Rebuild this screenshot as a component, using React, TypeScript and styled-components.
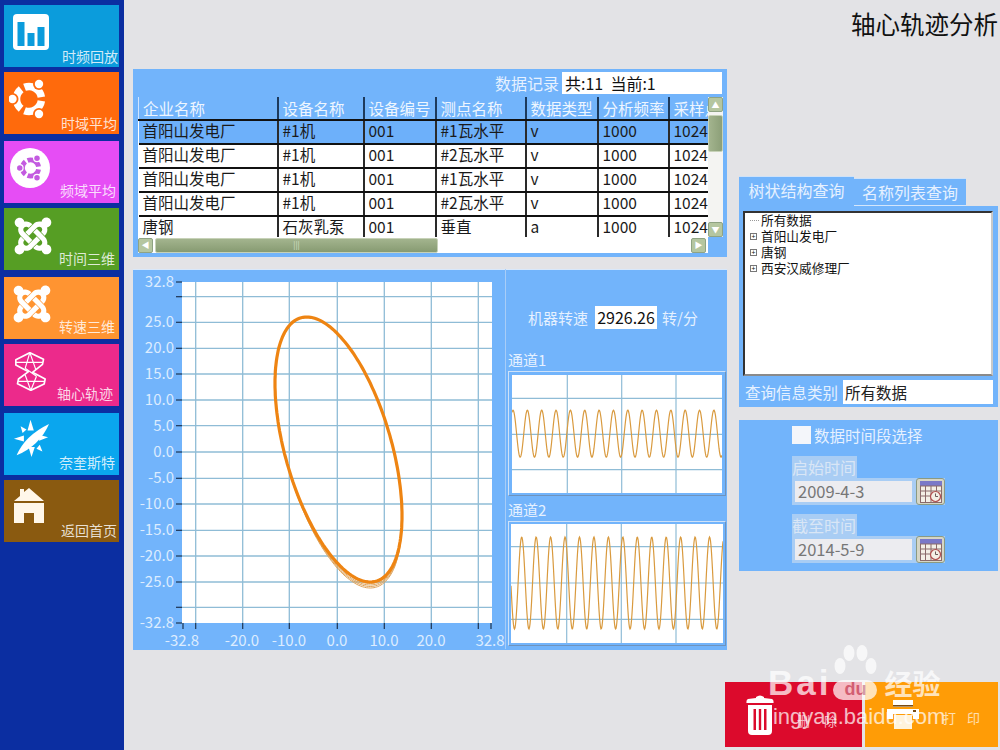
import styled, { createGlobalStyle } from "styled-components";
import { FaJoomla } from "react-icons/fa";

const GlobalStyle = createGlobalStyle`
    html, body {
        margin: 0;
        padding: 0;
        background: #e3e3e6;
        font-family: "Noto Sans CJK SC", "Liberation Sans", sans-serif;
    }
`

const BLUE = "#72b4fb";
const LABEL = "#e6f1ff";
const GRID = "#8fbcd6";

// three arcs split by slits at 0, 120 and 240 degrees, with a dot over each arc
const UbuntuMark = ({ color, bg }: { color: string; bg: string }) => {
    const arc = (from: number, to: number) => {
        const r = 12.5;
        const rad = (d: number) => (d * Math.PI) / 180;
        return `M${20 + r * Math.cos(rad(from))} ${20 + r * Math.sin(rad(from))} A${r} ${r} 0 0 1 ${20 + r * Math.cos(rad(to))} ${20 + r * Math.sin(rad(to))}`;
    };
    const dots = [[30, 5], [30, 35], [3.5, 20]];
    return (
        <g>
            <g fill="none" stroke={color} strokeWidth="7.5">
                <path d={arc(9, 111)} />
                <path d={arc(129, 231)} />
                <path d={arc(249, 351)} />
            </g>
            {dots.map(([cx, cy]) => <circle key={cy + cx} cx={cx} cy={cy} r="6" fill={bg} />)}
            {dots.map(([cx, cy]) => <circle key={cy + cx} cx={cx} cy={cy} r="4.200" fill={color} />)}
        </g>
    );
};

const BarsIcon = () => (
    <svg width="36" height="36" viewBox="0 0 36 36">
        <rect width="36" height="36" rx="4" fill="#fff" />
        <rect x="4.5" y="8" width="7" height="24" fill="#0b9cdc" />
        <rect x="14.5" y="19" width="7" height="13" fill="#0b9cdc" />
        <rect x="24.5" y="13" width="7" height="19" fill="#0b9cdc" />
    </svg>
);

const UbuntuIcon = () => (
    <svg width="40" height="40" viewBox="0 0 40 40">
        <UbuntuMark color="#fff" bg="#ff6a0c" />
    </svg>
);

const UbuntuDiscIcon = () => (
    <svg width="40" height="40" viewBox="0 0 40 40">
        <circle cx="20" cy="20" r="20" fill="#fff" />
        <g transform="translate(7.500 7) scale(0.65)">
            <UbuntuMark color="#c35be0" bg="#fff" />
        </g>
    </svg>
);

const ZuneIcon = () => (
    <svg width="31" height="39" viewBox="28 11 92 117" fill="none" stroke="#fff" strokeLinejoin="round">
        <path d="M72 13 L113 33 L110 48 L80 72 L118 92 L115 107 L75 126 L35 106 L38 92 L68 70 L30 50 L30 34 Z" strokeWidth="5" />
        <path d="M72 13 L58 60 M72 13 L90 64 M30 42 L110 42 M58 60 L92 84 M75 126 L58 80 M75 126 L92 84 M37 99 L116 99" strokeWidth="3.500" />
    </svg>
);

const CompassIcon = () => (
    <svg width="37" height="39" viewBox="20 10 110 118" fill="#fff">
        <path d="M30 120 Q55 60 128 25 Q100 90 30 120 Z" />
        <path d="M72 12 L63 45 L82 45 Z M75 125 L66 95 L85 95 Z M22 70 L52 60 L52 78 Z M125 65 L98 58 L98 76 Z" />
        <path d="M42 32 L60 42 L48 52 Z M108 108 L90 100 L100 88 Z" />
    </svg>
);

const HomeIcon = () => (
    <svg width="30" height="35" viewBox="0 0 30 35" fill="#fff7ea">
        <path d="M15 0 L30 13 L0 13 L6 8 L6 1 L10 1 L10 4 Z" />
        <path d="M0 15 H30 V35 H20 V25 H10 V35 H0 Z" />
    </svg>
);

const TrashIcon = () => (
    <svg width="28" height="40" viewBox="0 0 28 40" fill="#fff">
        <path d="M10 2 Q14 -1 18 2 L18 3 L26 4 Q28 5 27.5 8 L0.5 8 Q0 5 2 4 L10 3 Z" />
        <path fillRule="evenodd" d="M2 10 H26 V36 Q26 40 22 40 H6 Q2 40 2 36 Z M7.5 14 V35 H10 V14 Z M12.8 14 V35 H15.2 V14 Z M18 14 V35 H20.5 V14 Z" />
    </svg>
);

const PrinterIcon = () => (
    <svg width="32" height="29" viewBox="0 0 32 29">
        <rect x="6" y="0" width="20" height="7" fill="#fff" />
        <rect x="6" y="5" width="20" height="1.6" fill="#7a4b12" />
        <path d="M0 9 H32 V19 H26 V14 H6 V19 H0 Z" fill="#fff" />
        <rect x="7" y="15" width="18" height="14" fill="#fff3dc" />
        <rect x="26" y="10" width="3" height="2" fill="#7a4b12" />
    </svg>
);

const CalendarIcon = () => (
    <svg width="22" height="22" viewBox="0 0 22 22">
        <rect width="22" height="22" fill="#f4efe6" />
        <rect width="22" height="5" fill="#7a78c8" />
        <path d="M0 5 H22 M0 10 H22 M0 15 H22 M0 21.5 H22 M.5 5 V22 M5.5 5 V22 M11 5 V22 M16.500 5 V22 M21.500 5 V22" stroke="#8a6a6a" fill="none" />
        <circle cx="15.500" cy="15.500" r="5" fill="#f4efe6" stroke="#b05050" strokeWidth="1.200" />
        <path d="M15.500 12.500 V15.500 H18" stroke="#6a5a5a" fill="none" />
    </svg>
);

const PawIcon = () => (
    <svg width="44" height="46" viewBox="0 0 44 46" fill="#fff">
        <ellipse cx="7" cy="21" rx="5.500" ry="8" />
        <ellipse cx="16" cy="8" rx="5.500" ry="8" />
        <ellipse cx="29" cy="8" rx="5.500" ry="8" />
        <ellipse cx="38" cy="21" rx="5.500" ry="8" />
    </svg>
);

const tiles = [
    { label: "时频回放", bg: "#0b9cdc", mt: 5, pr: 1, pb: 1, left: 9, top: 9, icon: <BarsIcon /> },
    { label: "时域平均", bg: "#ff6a0c", mt: 5, pr: 2, pb: 1, left: 5, top: 7, icon: <UbuntuIcon /> },
    { label: "频域平均", bg: "#e64df5", mt: 7, pr: 3, pb: 3, left: 6, top: 7, icon: <UbuntuDiscIcon /> },
    { label: "时间三维", bg: "#569e24", mt: 5, pr: 4, pb: 2, left: 8, top: 7, icon: <FaJoomla size={42} color="#fff" /> },
    { label: "转速三维", bg: "#ff9431", mt: 7, pr: 4, pb: 3, left: 7, top: 6, icon: <FaJoomla size={42} color="#fff" /> },
    { label: "轴心轨迹", bg: "#ec2a8b", mt: 5, pr: 6, pb: 3, left: 11, top: 8, icon: <ZuneIcon /> },
    { label: "奈奎斯特", bg: "#0aa6ee", mt: 7, pr: 4, pb: 3, left: 9, top: 6, icon: <CompassIcon /> },
    { label: "返回首页", bg: "#8a5a10", mt: 5, pr: 2, pb: 2, left: 10, top: 8, icon: <HomeIcon /> },
];

const columns = [
    { title: "企业名称", width: 139 },
    { title: "设备名称", width: 86 },
    { title: "设备编号", width: 72 },
    { title: "测点名称", width: 90 },
    { title: "数据类型", width: 72 },
    { title: "分析频率", width: 71 },
    { title: "采样点数", width: 40 },
];

const rows = [
    ["首阳山发电厂", "#1机", "001", "#1瓦水平", "v", "1000", "1024"],
    ["首阳山发电厂", "#1机", "001", "#2瓦水平", "v", "1000", "1024"],
    ["首阳山发电厂", "#1机", "001", "#1瓦水平", "v", "1000", "1024"],
    ["首阳山发电厂", "#1机", "001", "#2瓦水平", "v", "1000", "1024"],
    ["唐钢", "石灰乳泵", "001", "垂直", "a", "1000", "1024"],
];

const orbitX = [195.7, 242.7, 289.3, 337.3, 384.3, 431.3, 478.3];
const orbitY = [296.7, 322.3, 348.3, 374, 400, 425.7, 452, 478.3, 504, 530.3, 556, 582, 607.3];
const yLabels = [
    { y: 282, t: "32.8" }, { y: 322.3, t: "25.0" }, { y: 348.3, t: "20.0" }, { y: 374, t: "15.0" },
    { y: 400, t: "10.0" }, { y: 425.7, t: "5.0" }, { y: 452, t: "0.0" }, { y: 478.3, t: "-5.0" },
    { y: 504, t: "-10.0" }, { y: 530.3, t: "-15.0" }, { y: 556, t: "-20.0" }, { y: 582, t: "-25.0" },
    { y: 623, t: "-32.8" },
];
const xLabels = [
    { x: 182, t: "-32.8" }, { x: 242, t: "-20.0" }, { x: 289, t: "-10.0" }, { x: 337, t: "0.0" },
    { x: 384, t: "10.0" }, { x: 431, t: "20.0" }, { x: 490, t: "32.8" },
];

const orbitPath = (drift: number) => {
    let d = "";
    for (let i = 0; i <= 180; i++) {
        const t = (i / 180) * Math.PI * 2;
        const s = Math.sin(t + Math.PI / 6);
        const low = Math.max(0, s);
        const x = 338.5 + 63.5 * Math.cos(t);
        const y = 449.5 + 132.5 * s + drift * low;
        d += `${i ? "L" : "M"}${x.toFixed(1)} ${y.toFixed(1)} `;
    }
    return d + "Z";
};

const wavePath = (x0: number, x1: number, center: number, amp: number, peak: number, period: number) => {
    let d = "";
    for (let x = x0; x <= x1; x += 0.5) {
        const y = center - amp * Math.cos((2 * Math.PI * (x - peak)) / period);
        d += `${x === x0 ? "M" : "L"}${x} ${y.toFixed(1)} `;
    }
    return d;
};

const App = () => {
    return (
        <Page>
            <GlobalStyle />
            <Sidebar>
                {tiles.map((tile) => (
                    <Tile key={tile.label} $bg={tile.bg} $mt={tile.mt}>
                        <TileIcon $left={tile.left} $top={tile.top}>{tile.icon}</TileIcon>
                        <TileLabel $pr={tile.pr} $pb={tile.pb}>{tile.label}</TileLabel>
                    </Tile>
                ))}
            </Sidebar>
            <Main>
                <TitleRow>轴心轨迹分析</TitleRow>
                <Body>
                    <LeftColumn>
                        <TablePanel>
                            <RecordBar>
                                <span>数据记录</span>
                                <RecordBox>共:11&nbsp;&nbsp;当前:1</RecordBox>
                            </RecordBar>
                            <TableGrid>
                                <TableView>
                                    <DataTable>
                                        <thead>
                                            <tr>
                                                {columns.map((col) => (
                                                    <HeadCell key={col.title} $w={col.width}>{col.title}</HeadCell>
                                                ))}
                                            </tr>
                                        </thead>
                                        <tbody>
                                            {rows.map((row, i) => (
                                                <DataRow key={i} $selected={i === 0}>
                                                    {row.map((cell, j) => <Cell key={j}>{cell}</Cell>)}
                                                </DataRow>
                                            ))}
                                        </tbody>
                                    </DataTable>
                                </TableView>
                                <VScroll>
                                    <ScrollButton>▲</ScrollButton>
                                    <VThumb />
                                    <ScrollButton>▼</ScrollButton>
                                </VScroll>
                                <HScroll>
                                    <ScrollButton>◀</ScrollButton>
                                    <HThumb>|||</HThumb>
                                    <ScrollButton>▶</ScrollButton>
                                </HScroll>
                            </TableGrid>
                        </TablePanel>
                        <ChartPanel>
                            <OrbitChart viewBox="133 269 372 380" width="372" height="380">
                                <rect x="182" y="282" width="310" height="341" fill="#fff" />
                                {orbitX.map((x) => <line key={x} x1={x} x2={x} y1="282" y2="623" stroke={GRID} strokeWidth="1.300" />)}
                                {orbitY.map((y) => <line key={y} x1="182" x2="492" y1={y} y2={y} stroke={GRID} strokeWidth="1.300" />)}
                                {[282, ...orbitY, 623].map((y) => <line key={y} x1="176" x2="182" y1={y} y2={y} stroke="#1c3350" strokeWidth="1.200" />)}
                                {[183, ...orbitX.slice(0, 6), 478.3, 491].map((x, i) => <line key={i} x1={x} x2={x} y1="623" y2="629" stroke="#1c3350" strokeWidth="1.200" />)}
                                {yLabels.map((l) => <AxisText key={l.t} x="174" y={l.y + 5} textAnchor="end">{l.t}</AxisText>)}
                                {xLabels.map((l) => <AxisText key={l.t} x={l.x} y="646" textAnchor="middle">{l.t}</AxisText>)}
                                {[6, 4.500, 3, 1.500].map((d) => <path key={d} d={orbitPath(d)} fill="none" stroke="#dfa35a" strokeWidth="1" />)}
                                <path d={orbitPath(0)} fill="none" stroke="#ee8412" strokeWidth="3.200" />
                            </OrbitChart>
                            <SideColumn>
                                <SpeedRow>
                                    <span>机器转速</span>
                                    <SpeedBox>2926.26</SpeedBox>
                                    <span>转/分</span>
                                </SpeedRow>
                                <ChannelLabel>通道1</ChannelLabel>
                                <WaveFrame>
                                    <svg viewBox="512 375 210 118" width="210" height="118" display="block">
                                        <rect x="512" y="375" width="210" height="118" fill="#fff" />
                                        {[567.3, 621.7, 676].map((x) => <line key={x} x1={x} x2={x} y1="375" y2="493" stroke={GRID} strokeWidth="1.200" />)}
                                        {[398.3, 434.3, 469.7].map((y) => <line key={y} x1="512" x2="722" y1={y} y2={y} stroke={GRID} strokeWidth="1.200" />)}
                                        <path d={wavePath(512, 722, 433.7, 23.500, 513, 14.35)} fill="none" stroke="#d99a3e" strokeWidth="1.200" />
                                    </svg>
                                </WaveFrame>
                                <ChannelLabel>通道2</ChannelLabel>
                                <WaveFrame>
                                    <svg viewBox="511 525 212 119" width="212" height="119" display="block">
                                        <rect x="511" y="525" width="212" height="119" fill="#fff" />
                                        {[566.7, 621.3, 676].map((x) => <line key={x} x1={x} x2={x} y1="525" y2="644" stroke={GRID} strokeWidth="1.200" />)}
                                        {[547.7, 584, 620.3].map((y) => <line key={y} x1="511" x2="723" y1={y} y2={y} stroke={GRID} strokeWidth="1.200" />)}
                                        <path d={wavePath(511, 723, 584, 46, 521.7, 14.45)} fill="none" stroke="#d99a3e" strokeWidth="1.200" />
                                    </svg>
                                </WaveFrame>
                            </SideColumn>
                        </ChartPanel>
                    </LeftColumn>
                    <RightColumn>
                        <Tabs>
                            <Tab $active>树状结构查询</Tab>
                            <Tab>名称列表查询</Tab>
                        </Tabs>
                        <TreePanel>
                            <TreeBox>
                                <TreeItem><TreeDots /><span>所有数据</span></TreeItem>
                                <TreeItem><Plus>+</Plus><span>首阳山发电厂</span></TreeItem>
                                <TreeItem><Plus>+</Plus><span>唐钢</span></TreeItem>
                                <TreeItem><Plus>+</Plus><span>西安汉威修理厂</span></TreeItem>
                            </TreeBox>
                            <QueryRow>
                                <span>查询信息类别</span>
                                <QueryBox>所有数据</QueryBox>
                            </QueryRow>
                        </TreePanel>
                        <TimePanel>
                            <CheckRow>
                                <CheckBox />
                                <span>数据时间段选择</span>
                            </CheckRow>
                            <DateGroup>
                                <DateTitle>启始时间</DateTitle>
                                <DateRow>
                                    <DateInput>2009-4-3</DateInput>
                                    <CalendarButton><CalendarIcon /></CalendarButton>
                                </DateRow>
                            </DateGroup>
                            <DateGroup>
                                <DateTitle>截至时间</DateTitle>
                                <DateRow>
                                    <DateInput>2014-5-9</DateInput>
                                    <CalendarButton><CalendarIcon /></CalendarButton>
                                </DateRow>
                            </DateGroup>
                        </TimePanel>
                    </RightColumn>
                </Body>
                <Footer>
                    <ActionButton $bg="#dc0a2c" $w={137}>
                        <ActionIcon $left={21}><TrashIcon /></ActionIcon>
                        <ActionLabel $left={23} $gap={11} $down={11}>删 除</ActionLabel>
                    </ActionButton>
                    <ActionButton $bg="#ff9c06" $w={133}>
                        <ActionIcon $left={22}><PrinterIcon /></ActionIcon>
                        <ActionLabel $left={24} $gap={8} $down={5}>打 印</ActionLabel>
                    </ActionButton>
                </Footer>
            </Main>
            <Watermark>
                <LogoRow>
                    <LogoBai>Bai</LogoBai>
                    <LogoDu>
                        <PawSlot><PawIcon /></PawSlot>
                        du
                    </LogoDu>
                    <LogoJingyan>经验</LogoJingyan>
                </LogoRow>
                <LogoUrl>jingyan.baidu.com</LogoUrl>
            </Watermark>
        </Page>
    );
};

export default App;

const Page = styled.div`
    position: relative;
    width: 1000px;
    height: 750px;
    display: flex;
    overflow: hidden;
    background: #e3e3e6;
`

const Sidebar = styled.nav`
    width: 124px;
    flex: none;
    padding-left: 4px;
    box-sizing: border-box;
    background: #0b2ea1;
    display: flex;
    flex-direction: column;
`

const Tile = styled.div<{ $bg: string; $mt: number }>`
    width: 115px;
    height: 62px;
    flex: none;
    margin-top: ${(p) => p.$mt}px;
    background: ${(p) => p.$bg};
    display: grid;
`

const TileIcon = styled.div<{ $left: number; $top: number }>`
    grid-area: 1 / 1;
    justify-self: start;
    align-self: start;
    margin: ${(p) => p.$top}px 0 0 ${(p) => p.$left}px;
    line-height: 0;
`

const TileLabel = styled.span<{ $pr: number; $pb: number }>`
    grid-area: 1 / 1;
    justify-self: end;
    align-self: end;
    padding: 0 ${(p) => p.$pr}px ${(p) => p.$pb}px 0;
    font-size: 14px;
    line-height: 20px;
    color: rgba(255, 255, 255, 0.82);
`

const Main = styled.main`
    flex: 1;
    min-width: 0;
    display: flex;
    flex-direction: column;
    padding: 0 2px 3px 9px;
`

const TitleRow = styled.h1`
    height: 69px;
    margin: 0;
    padding-top: 7px;
    box-sizing: border-box;
    text-align: right;
    font-size: 24.5px;
    font-weight: 400;
    line-height: 34px;
    color: #111;
`

const Body = styled.div`
    display: flex;
    gap: 12px;
`

const LeftColumn = styled.div`
    width: 594px;
    display: flex;
    flex-direction: column;
    gap: 12px;
`

const TablePanel = styled.section`
    height: 188px;
    box-sizing: border-box;
    padding: 3px 4px 0 5px;
    background: ${BLUE};
`

const RecordBar = styled.div`
    height: 25px;
    display: flex;
    justify-content: flex-end;
    align-items: flex-start;
    gap: 3px;
    padding-right: 1px;
    font-size: 16px;
    line-height: 22px;
    color: ${LABEL};
`

const RecordBox = styled.div`
    width: 160px;
    height: 22px;
    padding-left: 3px;
    box-sizing: border-box;
    background: #fff;
    color: #111;
`

const TableGrid = styled.div`
    display: grid;
    grid-template-columns: 570px 15px;
    grid-template-rows: 140px 16px;
`

const TableView = styled.div`
    overflow: hidden;
    background: #fff;
`

const DataTable = styled.table`
    width: 570px;
    table-layout: fixed;
    border-collapse: collapse;
    font-size: 15.5px;
`

const HeadCell = styled.th<{ $w: number }>`
    width: ${(p) => p.$w}px;
    height: 23px;
    padding: 0 0 1px 4px;
    box-sizing: border-box;
    overflow: hidden;
    white-space: nowrap;
    text-align: left;
    font-weight: 400;
    background: ${BLUE};
    color: #eef6ff;
    border-left: 2px solid #1d3a5c;
    border-bottom: 2px solid #111;
    line-height: 20px;

    &:first-child {
        border-left: 1px solid #cfe4ff;
    }
`

const DataRow = styled.tr<{ $selected?: boolean }>`
    height: 23px;
    background: ${(p) => (p.$selected ? "#6db0fa" : "#fff")};

    &:nth-child(even) {
        height: 24px;
    }
`

const Cell = styled.td`
    padding: 0 0 3px 4px;
    box-sizing: border-box;
    overflow: hidden;
    white-space: nowrap;
    color: #1a1a1a;
    border-left: 2px solid #2a2a2a;
    border-bottom: 2px solid #111;
    line-height: 19px;

    &:first-child {
        border-left: none;
        padding-left: 4px;
    }

    tr:last-child & {
        border-bottom: none;
    }
`

const VScroll = styled.div`
    display: flex;
    flex-direction: column;
    background: #f4f4f2;
`

const ScrollButton = styled.div`
    width: 15px;
    height: 15px;
    flex: none;
    display: flex;
    align-items: center;
    justify-content: center;
    background: #b5c6a0;
    border: 1px solid #8fa383;
    border-radius: 2px;
    box-sizing: border-box;
    font-size: 8px;
    line-height: 1;
    color: #fff;
`

const VThumb = styled.div`
    width: 15px;
    height: 37px;
    margin-top: 3px;
    margin-bottom: auto;
    background: linear-gradient(90deg, #a3b48e, #8c9f78);
    border: 1px solid #c7d2b8;
    border-radius: 2px;
    box-sizing: border-box;
`

const HScroll = styled.div`
    grid-column: 1;
    display: flex;
    align-items: center;
    background: #fff;
    padding-right: 2px;
    justify-content: space-between;
`

const HThumb = styled.div`
    width: 283px;
    height: 15px;
    margin-right: auto;
    margin-left: 2px;
    background: linear-gradient(180deg, #a3b48e, #879b72);
    border: 1px solid #c7d2b8;
    border-radius: 2px;
    box-sizing: border-box;
    text-align: center;
    font-size: 8px;
    line-height: 12px;
    color: #d8e2cc;
`

const ChartPanel = styled.section`
    height: 381px;
    display: flex;
    background: ${BLUE};
    border-top: 1px solid #d8e8fb;
    box-sizing: border-box;
`

const OrbitChart = styled.svg`
    flex: none;
    display: block;
    margin-top: -1px;
    border-right: 1px solid #a8cdf7;
`

const AxisText = styled.text`
    font-family: "Noto Sans CJK SC", "Liberation Sans", sans-serif;
    font-size: 15px;
    fill: #dcecff;
`

const SideColumn = styled.div`
    flex: 1;
    min-width: 0;
    padding: 36px 0 0 2px;
    display: flex;
    flex-direction: column;
`

const SpeedRow = styled.div`
    height: 23px;
    padding-left: 20px;
    display: flex;
    align-items: center;
    gap: 5px;
    font-size: 15px;
    color: ${LABEL};
`

const SpeedBox = styled.div`
    width: 62px;
    height: 23px;
    margin-left: 2px;
    text-align: center;
    background: #fff;
    color: #111;
    font-size: 16px;
    line-height: 23px;
`

const ChannelLabel = styled.div`
    height: 22px;
    margin-top: 20px;
    font-size: 15px;
    line-height: 22px;
    color: ${LABEL};

    & ~ & {
        margin-top: 3px;
    }
`

const WaveFrame = styled.div`
    width: 218px;
    height: 125px;
    display: flex;
    align-items: center;
    justify-content: center;
    box-sizing: border-box;
    border: 1px solid #cfe2f8;
    border-right-color: #6e93bd;
    border-bottom-color: #6e93bd;
`

const RightColumn = styled.div`
    width: 259px;
    padding-top: 107px;
    display: flex;
    flex-direction: column;
`

const Tabs = styled.div`
    height: 30px;
    display: flex;
    align-items: flex-end;
`

const Tab = styled.div<{ $active?: boolean }>`
    width: ${(p) => (p.$active ? 115 : 112)}px;
    height: ${(p) => (p.$active ? 30 : 28)}px;
    box-sizing: border-box;
    background: ${BLUE};
    text-align: center;
    font-size: 16px;
    line-height: 27px;
    color: ${LABEL};
    border-top: 1px solid #cfe2f8;
    border-bottom: ${(p) => (p.$active ? "none" : "1px solid #d4e6fb")};
`

const TreePanel = styled.section`
    height: 201px;
    box-sizing: border-box;
    padding: 5px 5px 0 4px;
    background: ${BLUE};
`

const TreeBox = styled.div`
    height: 165px;
    box-sizing: border-box;
    padding: 0 0 0 5px;
    display: flex;
    flex-direction: column;
    gap: 2px;
    background: #fff;
    border: 2px solid;
    border-color: #333 #c9c9c9 #8a8a8a #333;
    font-size: 12.7px;
    color: #111;
`

const TreeItem = styled.div`
    height: 14px;
    display: flex;
    align-items: center;
    gap: 1px;
    line-height: 14px;
`

const TreeDots = styled.span`
    width: 9px;
    margin-right: 1px;
    border-top: 1px dotted #999;
`

const Plus = styled.span`
    width: 7px;
    height: 7px;
    margin-right: 3px;
    box-sizing: border-box;
    border: 1px solid #777;
    display: flex;
    align-items: center;
    justify-content: center;
    font-size: 7px;
    line-height: 1;
    color: #111;
`

const QueryRow = styled.div`
    margin-top: 4px;
    padding-left: 2px;
    display: flex;
    align-items: center;
    gap: 5px;
    font-size: 15.5px;
    color: ${LABEL};
`

const QueryBox = styled.div`
    width: 150px;
    height: 24px;
    box-sizing: border-box;
    padding-left: 2px;
    background: #fff;
    color: #222;
    font-size: 15.5px;
    line-height: 24px;
`

const TimePanel = styled.section`
    height: 151px;
    margin-top: 13px;
    box-sizing: border-box;
    padding: 5px 0 0 53px;
    background: ${BLUE};
`

const CheckRow = styled.div`
    height: 19px;
    display: flex;
    align-items: center;
    gap: 3px;
    font-size: 15.5px;
    color: ${LABEL};
`

const CheckBox = styled.div`
    width: 19px;
    height: 18px;
    background: #f4f6fa;
`

const DateGroup = styled.div`
    margin-top: 12px;

    & + & {
        margin-top: 9px;
    }
`

const DateTitle = styled.div`
    width: 65px;
    height: 22px;
    background: #a9cdf4;
    font-size: 16px;
    line-height: 22px;
    color: #d9e6f6;
`

const DateRow = styled.div`
    width: 153px;
    height: 27px;
    display: flex;
    align-items: center;
    justify-content: space-between;
    padding: 0 0 0 3px;
    box-sizing: border-box;
    background: #a9cdf4;
`

const DateInput = styled.div`
    width: 117px;
    height: 21px;
    padding-left: 3px;
    box-sizing: border-box;
    background: #ececf0;
    font-size: 16.5px;
    line-height: 21px;
    color: #777;
`

const CalendarButton = styled.div`
    width: 29px;
    height: 27px;
    display: flex;
    align-items: center;
    justify-content: center;
    box-sizing: border-box;
    background: #d6d6c6;
    border: 1px solid #8b9a82;
    border-radius: 3px;
`

const Footer = styled.footer`
    margin-top: auto;
    display: flex;
    justify-content: flex-end;
    gap: 3px;
`

const ActionButton = styled.div<{ $bg: string; $w: number }>`
    width: ${(p) => p.$w}px;
    height: 65px;
    display: flex;
    align-items: center;
    background: ${(p) => p.$bg};
`

const ActionIcon = styled.div<{ $left: number }>`
    margin-left: ${(p) => p.$left}px;
    line-height: 0;
`

const ActionLabel = styled.span<{ $left: number; $gap: number; $down: number }>`
    margin: ${(p) => p.$down}px 0 0 ${(p) => p.$left}px;
    font-size: 13px;
    word-spacing: ${(p) => p.$gap}px;
    white-space: nowrap;
    color: rgba(255, 255, 255, 0.7);
`

const Watermark = styled.div`
    position: absolute;
    left: 768px;
    top: 666px;
    width: 178px;
    opacity: 0.72;
    pointer-events: none;
    color: #fff;
`

const LogoRow = styled.div`
    display: flex;
    align-items: flex-end;
    height: 34px;
`

const LogoBai = styled.span`
    font-family: "Liberation Sans", sans-serif;
    font-size: 35px;
    font-weight: 700;
    letter-spacing: 3px;
    line-height: 34px;
`

const LogoDu = styled.span`
    position: relative;
    width: 44px;
    height: 20px;
    margin: 0 0 0 2px;
    border-radius: 10px;
    background: #fff;
    color: #cf7f8e;
    text-align: center;
    font-family: "Liberation Sans", sans-serif;
    font-size: 18px;
    font-weight: 700;
    line-height: 19px;
`

const PawSlot = styled.span`
    position: absolute;
    left: 0;
    top: -35px;
    line-height: 0;
`

const LogoJingyan = styled.span`
    margin-left: 7px;
    font-size: 28px;
    font-weight: 700;
    line-height: 34px;
`

const LogoUrl = styled.div`
    margin-top: 5px;
    font-family: "Liberation Sans", sans-serif;
    font-size: 22px;
    line-height: 24px;
    white-space: nowrap;
`
